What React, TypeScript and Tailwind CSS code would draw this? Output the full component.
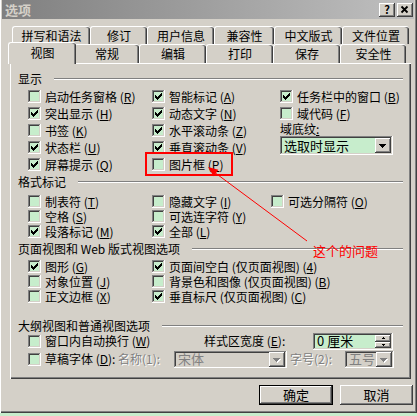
import React from 'react';

// classic win9x bevels
const RAISED =
  'shadow-[inset_-1px_-1px_0_#404040,inset_1px_1px_0_#ffffff,inset_-2px_-2px_0_#808080,inset_2px_2px_0_#d4d0c8]';
const SUNKEN =
  'shadow-[inset_-1px_-1px_0_#ffffff,inset_1px_1px_0_#808080,inset_-2px_-2px_0_#d4d0c8,inset_2px_2px_0_#404040]';

const CHECK = ['......#', '.....##', '#...###', '##.###.', '#####..', '.###...', '..#....'];
const ARROW = ['#######', '.#####.', '..###..', '...#...'];

function Bits({ rows, x, y, color }: { rows: string[]; x: number; y: number; color: string }) {
  return (
    <>
      {rows.map((r, j) =>
        r.split('').map((c, i) => (c === '#' ? <rect key={`${i}-${j}`} x={x + i} y={y + j} width="1" height="1" fill={color} /> : null))
      )}
    </>
  );
}

function Box({ on }: { on?: boolean }) {
  return (
    <span className={`relative block w-[13px] h-[13px] shrink-0 bg-[#c7edcc] ${SUNKEN}`}>
      {on && (
        <svg className="absolute left-0 top-0" width="13" height="13" shapeRendering="crispEdges">
          <Bits rows={CHECK} x={3} y={3} color="#000" />
        </svg>
      )}
    </span>
  );
}

function Opt({ on, text, k }: { on?: boolean; text: string; k: string }) {
  return (
    <div className="flex items-center gap-[4px] h-full">
      <Box on={on} />
      <span className="whitespace-nowrap leading-[12px]">
        {text} (<span className="underline underline-offset-1">{k}</span>)
      </span>
    </div>
  );
}

function Group({ title }: { title: string }) {
  return (
    <div className="flex items-center h-[12px] pl-[8px] pr-[8px]">
      <span className="whitespace-nowrap leading-[12px]">{title}</span>
      <span className="flex-1 ml-[12px] h-[2px] border-t border-t-[#808080] border-b border-b-white" />
    </div>
  );
}

function DropBtn({ disabled }: { disabled?: boolean }) {
  return (
    <span className={`relative block w-[16px] h-[15px] bg-[#d4d0c8] ${RAISED}`}>
      <svg className="absolute left-0 top-0" width="16" height="15" shapeRendering="crispEdges">
        {disabled && <Bits rows={ARROW} x={5} y={7} color="#fff" />}
        <Bits rows={ARROW} x={4} y={6} color={disabled ? '#808080' : '#000'} />
      </svg>
    </span>
  );
}

function Tab({ text, w, sel }: { text: string; w: number; sel?: boolean }) {
  return (
    <div
      style={{ width: w }}
      className={`flex items-center justify-center shrink-0 rounded-t-[3px] border-t border-l border-white bg-[#d4d0c8] shadow-[inset_-1px_0_0_#404040,inset_-2px_0_0_#808080] ${
        sel ? 'relative z-10 -mt-[2px] h-[22px] -ml-[2px] -mr-[2px] px-[2px] pb-[1px]' : 'h-full'
      }`}
    >
      <span className="leading-[12px]">{text}</span>
    </div>
  );
}

function Disabled({ children }: { children: React.ReactNode }) {
  return <span className="whitespace-nowrap leading-[12px] text-[#808080] [text-shadow:1px_1px_0_#ffffff]">{children}</span>;
}

export default function App() {
  return (
    <div className="relative w-[417px] h-[416px] bg-[#c7edcc] overflow-hidden text-[12px] text-black font-['Noto_Sans_CJK_SC','Noto_Sans',sans-serif]">
      <div className="w-[417px] h-[413px] bg-[#d4d0c8] pl-[2px] shadow-[inset_1px_0_0_#ffffff,inset_-1px_-1px_0_#404040,inset_-2px_-2px_0_#808080]">
        {/* title bar */}
        <div className="flex items-center h-[19px] w-[412px] pl-[3px] pr-[1px] bg-gradient-to-r from-[#808080] to-[#c0c0c0]">
          <span className="font-bold text-[#d4d0c8] leading-[13px] text-[13px]">选项</span>
          <div className="ml-auto flex gap-[2px]">
            <span className={`flex items-center justify-center w-[16px] h-[14px] bg-[#d4d0c8] font-bold text-[11px] leading-[11px] ${RAISED}`}>?</span>
            <span className={`relative block w-[16px] h-[14px] bg-[#d4d0c8] ${RAISED}`}>
              <svg className="absolute left-0 top-0" width="16" height="14">
                <path d="M4.5 3.5 L10.5 9.5 M10.5 3.5 L4.5 9.5" stroke="#000" strokeWidth="1.8" />
              </svg>
            </span>
          </div>
        </div>

        {/* tabs */}
        <div className="pt-[7px]">
          <div className="flex h-[18px] ml-[10px]">
            <Tab text="拼写和语法" w={78} />
            <Tab text="修订" w={57} />
            <Tab text="用户信息" w={67} />
            <Tab text="兼容性" w={60} />
            <Tab text="中文版式" w={68} />
            <Tab text="文件位置" w={67} />
          </div>
          <div className="flex h-[19px] ml-[8px]">
            <Tab text="视图" w={68} sel />
            <Tab text="常规" w={65} />
            <Tab text="编辑" w={67} />
            <Tab text="打印" w={67} />
            <Tab text="保存" w={67} />
            <Tab text="安全性" w={66} />
          </div>
        </div>

        {/* panel */}
        <div className="ml-[8px] w-[401px] h-[316px] pt-[10px] bg-[#d4d0c8] shadow-[inset_1px_1px_0_#ffffff,inset_-1px_-1px_0_#404040,inset_-2px_-2px_0_#808080]">
          <Group title="显示" />
          <div className="flex mt-[3px] pl-[18px]">
            <div className="w-[124px] flex flex-col">
              <div className="h-[17px]"><Opt text="启动任务窗格" k="R" /></div>
              <div className="h-[17px]"><Opt on text="突出显示" k="H" /></div>
              <div className="h-[17px]"><Opt text="书签" k="K" /></div>
              <div className="h-[17px]"><Opt on text="状态栏" k="U" /></div>
              <div className="h-[17px]"><Opt on text="屏幕提示" k="Q" /></div>
            </div>
            <div className="w-[128px] flex flex-col">
              <div className="h-[17px]"><Opt on text="智能标记" k="A" /></div>
              <div className="h-[17px]"><Opt on text="动态文字" k="N" /></div>
              <div className="h-[17px]"><Opt on text="水平滚动条" k="Z" /></div>
              <div className="h-[17px]"><Opt on text="垂直滚动条" k="V" /></div>
              <div className="h-[17px]"><Opt text="图片框" k="P" /></div>
            </div>
            <div className="flex flex-col">
              <div className="h-[17px]"><Opt on text="任务栏中的窗口" k="B" /></div>
              <div className="h-[17px]"><Opt text="域代码" k="F" /></div>
              <div className="h-[14px] flex items-center leading-[12px]">
                域底纹<span className="underline underline-offset-1">:</span>
              </div>
              <div className={`flex items-center w-[113px] h-[19px] pl-[4px] pr-[2px] bg-[#c7edcc] ${SUNKEN}`}>
                <span className="leading-[12px] text-[13px]">选取时显示</span>
                <span className="ml-auto"><DropBtn /></span>
              </div>
            </div>
          </div>

          <div className="mt-[3px]"><Group title="格式标记" /></div>
          <div className="flex mt-[6px] pl-[18px]">
            <div className="w-[124px] flex flex-col">
              <div className="h-[15px]"><Opt text="制表符" k="T" /></div>
              <div className="h-[15px]"><Opt text="空格" k="S" /></div>
              <div className="h-[15px]"><Opt on text="段落标记" k="M" /></div>
            </div>
            <div className="w-[119px] flex flex-col">
              <div className="h-[15px]"><Opt text="隐藏文字" k="I" /></div>
              <div className="h-[15px]"><Opt text="可选连字符" k="Y" /></div>
              <div className="h-[15px]"><Opt on text="全部" k="L" /></div>
            </div>
            <div className="flex flex-col">
              <div className="h-[15px]"><Opt text="可选分隔符" k="O" /></div>
            </div>
          </div>

          <div className="mt-[4px]"><Group title="页面视图和 Web 版式视图选项" /></div>
          <div className="flex mt-[4px] pl-[18px]">
            <div className="w-[124px] flex flex-col">
              <div className="h-[15px]"><Opt on text="图形" k="G" /></div>
              <div className="h-[15px]"><Opt text="对象位置" k="J" /></div>
              <div className="h-[15px]"><Opt text="正文边框" k="X" /></div>
            </div>
            <div className="flex flex-col">
              <div className="h-[15px]"><Opt on text="页面间空白 (仅页面视图)" k="4" /></div>
              <div className="h-[15px]"><Opt text="背景色和图像 (仅页面视图)" k="B" /></div>
              <div className="h-[15px]"><Opt on text="垂直标尺 (仅页面视图)" k="C" /></div>
            </div>
          </div>

          <div className="mt-[16px]"><Group title="大纲视图和普通视图选项" /></div>
          <div className="flex flex-col pl-[18px]">
            <div className="flex items-center h-[18px]">
              <div className="w-[176px] h-full"><Opt text="窗口内自动换行" k="W" /></div>
              <span className="w-[109px] whitespace-nowrap leading-[12px]">
                样式区宽度 (<span className="underline underline-offset-1">E</span>):
              </span>
              <div className={`flex items-center w-[80px] h-[17px] pl-[4px] pr-[2px] bg-[#c7edcc] ${SUNKEN}`}>
                <span className="leading-[12px] text-[13px]">0 厘米</span>
                <div className="ml-auto flex flex-col">
                  <span className={`relative block w-[16px] h-[7px] bg-[#d4d0c8] ${RAISED}`}>
                    <svg className="absolute left-0 top-0" width="16" height="7" shapeRendering="crispEdges">
                      <Bits rows={['..#..', '.###.', '#####'].slice(0, 2)} x={6} y={2} color="#000" />
                    </svg>
                  </span>
                  <span className={`relative block w-[16px] h-[6px] bg-[#d4d0c8] ${RAISED}`}>
                    <svg className="absolute left-0 top-0" width="16" height="6" shapeRendering="crispEdges">
                      <Bits rows={['.###.', '..#..']} x={6} y={2} color="#000" />
                    </svg>
                  </span>
                </div>
              </div>
            </div>
            <div className="flex items-center h-[18px]">
              <div className="w-[90px] h-full flex items-center">
                <Opt text="草稿字体" k="D" />
                <span className="leading-[12px]">:</span>
              </div>
              <span className="w-[56px]"><Disabled>名称(1):</Disabled></span>
              <div className={`flex items-center w-[113px] h-[17px] pl-[4px] pr-[2px] bg-[#d4d0c8] ${SUNKEN}`}>
                <span className="leading-[12px] text-[13px] text-[#808080]">宋体</span>
                <span className="ml-auto"><DropBtn disabled /></span>
              </div>
              <span className="w-[58px] pl-[3px]"><Disabled>字号(2):</Disabled></span>
              <div className={`flex items-center w-[49px] h-[17px] pl-[4px] pr-[2px] bg-[#d4d0c8] ${SUNKEN}`}>
                <span className="leading-[12px] text-[13px] text-[#808080]">五号</span>
                <span className="ml-auto"><DropBtn disabled /></span>
              </div>
            </div>
          </div>
        </div>

        {/* buttons */}
        <div className="flex justify-end gap-[7px] mt-[6px] w-[412px] pr-[1px]">
          <div className="w-[74px] h-[20px] border border-black">
            <div className={`flex items-center justify-center w-full h-full bg-[#d4d0c8] ${RAISED}`}>
              <span className="leading-[12px] text-[13px]">确定</span>
            </div>
          </div>
          <div className={`flex items-center justify-center w-[73px] h-[20px] bg-[#d4d0c8] ${RAISED}`}>
            <span className="leading-[12px] text-[13px]">取消</span>
          </div>
        </div>
      </div>

      {/* red annotation on top of the dialog */}
      <div className="absolute left-[145px] top-[152px] w-[88px] h-[24px] border-2 border-[#ff0000]" />
      <svg className="absolute left-0 top-0 pointer-events-none" width="417" height="416">
        <line x1="307" y1="241" x2="214" y2="172" stroke="#ff0000" strokeWidth="1" />
        <polygon points="208,167 218.4,169.8 213.6,176.2" fill="#ff0000" />
      </svg>
      <span className="absolute left-[313px] top-[244px] leading-[13px] text-[13px] text-[#ff0000]">这个的问题</span>
    </div>
  );
}
